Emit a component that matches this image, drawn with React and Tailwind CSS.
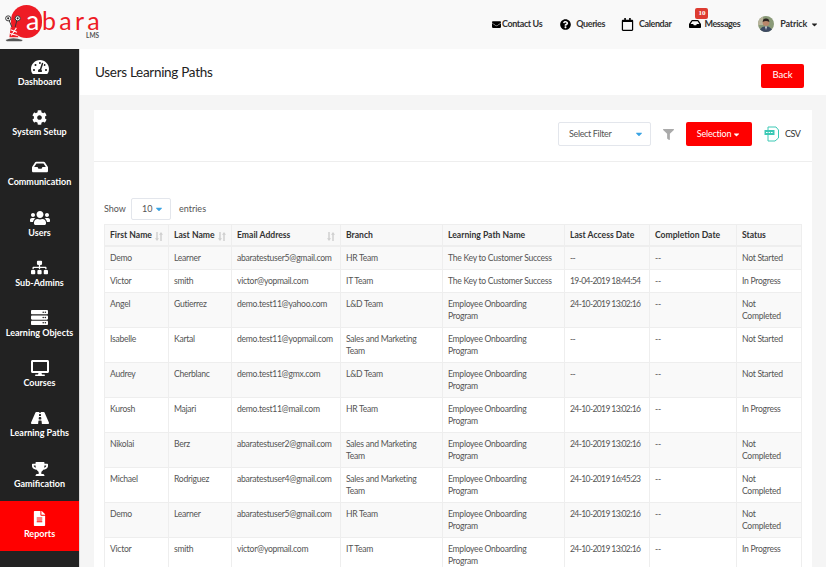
import React from "react";
import { FaTachometerAlt, FaCog, FaInbox, FaUsers, FaSitemap, FaServer, FaDesktop, FaRoad, FaTrophy, FaFileAlt, FaEnvelope, FaQuestionCircle, FaRegCalendar, FaCaretDown, FaFilter } from "react-icons/fa";

const nav = [
  ["Dashboard", FaTachometerAlt, 18],
  ["System Setup", FaCog, 15],
  ["Communication", FaInbox, 16],
  ["Users", FaUsers, 20],
  ["Sub-Admins", FaSitemap, 17],
  ["Learning Objects", FaServer, 17],
  ["Courses", FaDesktop, 18],
  ["Learning Paths", FaRoad, 18],
  ["Gamification", FaTrophy, 16],
  ["Reports", FaFileAlt, 15],
];

const KEY = "The Key to Customer Success";
const EOP = "Employee Onboarding\nProgram";
const SM = "Sales and Marketing\nTeam";
const NC = "Not\nCompleted";
const rows = [
  ["Demo", "Learner", "abaratestuser5@gmail.com", "HR Team", KEY, "--", "--", "Not Started"],
  ["Victor", "smith", "victor@yopmail.com", "IT Team", KEY, "19-04-2019 18:44:54", "--", "In Progress"],
  ["Angel", "Gutierrez", "demo.test11@yahoo.com", "L&D Team", EOP, "24-10-2019 13:02:16", "--", NC],
  ["Isabelle", "Kartal", "demo.test11@yopmail.com", SM, EOP, "--", "--", "Not Started"],
  ["Audrey", "Cherblanc", "demo.test11@gmx.com", "L&D Team", EOP, "--", "--", "Not Started"],
  ["Kurosh", "Majari", "demo.test11@mail.com", "HR Team", EOP, "24-10-2019 13:02:16", "--", "In Progress"],
  ["Nikolai", "Berz", "abaratestuser2@gmail.com", SM, EOP, "24-10-2019 13:02:16", "--", NC],
  ["Michael", "Rodriguez", "abaratestuser4@gmail.com", SM, EOP, "24-10-2019 16:45:23", "--", NC],
  ["Demo", "Learner", "abaratestuser5@gmail.com", "HR Team", EOP, "24-10-2019 13:02:16", "--", NC],
  ["Victor", "smith", "victor@yopmail.com", "IT Team", EOP, "24-10-2019 13:02:16", "--", "In Progress"],
];

const heads = [
  ["First Name", 64, true],
  ["Last Name", 63, true],
  ["Email Address", 109, true],
  ["Branch", 102, false],
  ["Learning Path Name", 122, false],
  ["Last Access Date", 85, false],
  ["Completion Date", 87, false],
  ["Status", 65, false],
];

function SortIcon() {
  return (
    <svg viewBox="0 0 10 10" className="absolute right-[5px] top-[7px] h-[9px] w-[8px] text-[#cfcfcf]" fill="currentColor" preserveAspectRatio="none">
      <path d="M1.6 0h1.8v7H5L2.5 10 0 7h1.6z" />
      <path d="M6.6 10h1.8V3H10L7.5 0 5 3h1.6z" />
    </svg>
  );
}

function Logo() {
  return (
    <div className="relative h-[49px] w-[110px] shrink-0 font-['Lato',sans-serif]">
      <div className="absolute left-[11px] top-[5px] h-[33px] w-[31px] rounded-full bg-[#ee1c25]" />
      <span className="absolute left-[26px] top-[8px] text-[27px] font-normal leading-[24px] text-white">a</span>
      <span className="absolute left-[42px] top-[8px] text-[25px] font-normal leading-[24px] tracking-[3.3px] text-[#ee1c25]">bara</span>
      <span className="absolute left-[86px] top-[32px] text-[6.5px] font-bold leading-[8px] text-[#555]">LMS</span>
      <svg viewBox="0 0 30 44" className="absolute left-[5px] top-[14px] h-[29px] w-[19px]">
        <path d="M6 8 L11 20 M19 8 L16 20" stroke="#333" strokeWidth="1.5" />
        <circle cx="5" cy="6" r="4" fill="#fff" stroke="#333" strokeWidth="1.5" />
        <circle cx="20" cy="6" r="4" fill="#fff" stroke="#333" strokeWidth="1.5" />
        <circle cx="5" cy="6" r="1.6" fill="#222" />
        <circle cx="20" cy="6" r="1.6" fill="#222" />
        <path d="M9 20 H18 L21 36 H7 Z" fill="#ee1c25" />
        <path d="M9 24 L19 28 M8 30 L20 33 M18 21 L10 33" stroke="#fff" strokeWidth="1.6" />
        <path d="M1 40 Q12 35 28 40 L26 42 H3 Z" fill="#555" />
      </svg>
    </div>
  );
}

function Avatar() {
  return (
    <svg viewBox="0 0 16 16" className="h-[16px] w-[16px] rounded-full">
      <rect width="16" height="16" fill="#8a9a78" />
      <rect x="0" width="5" height="9" fill="#b9b49c" />
      <path d="M1 16 Q3 10 8 10.5 Q13 10 15 16Z" fill="#3d4a63" />
      <circle cx="8" cy="6.5" r="3.4" fill="#b9876b" />
      <path d="M4.6 6 Q5 2.4 8 2.6 Q11 2.4 11.4 6 Q8 4 4.6 6Z" fill="#2b2320" />
      <path d="M7 10.5 H9 L8 14Z" fill="#e6e6e6" />
    </svg>
  );
}

function TopLink({ icon, label, className = "" }) {
  return (
    <div className={`flex items-center text-[9px] font-bold leading-[12px] tracking-[-0.4px] text-[#333] ${className}`}>
      {icon}
      <span>{label}</span>
    </div>
  );
}

export default function App() {
  return (
    <div className="flex h-[567px] w-[826px] flex-col overflow-hidden bg-[#f5f5f5] font-['Lato',sans-serif] text-[#444]">
      <header className="flex h-[49px] shrink-0 items-center bg-[#f9f9f9]">
        <Logo />
        <nav className="ml-auto flex items-center pb-[1px] pr-[7px]">
          <TopLink icon={<FaEnvelope className="mr-[1px] text-[9px] text-black" />} label="Contact Us" className="mr-[18px]" />
          <TopLink icon={<FaQuestionCircle className="mr-[5px] text-[11px] text-black" />} label="Queries" className="mr-[16px]" />
          <TopLink icon={<FaRegCalendar className="mr-[5px] text-[13px] text-black" />} label="Calendar" className="mr-[18px]" />
          <div className="relative mr-[18px]">
            <TopLink icon={<FaInbox className="mr-[3px] text-[12px] text-black" />} label="Messages" />
            <span className="absolute left-[6px] top-[-10px] flex h-[11px] w-[13px] items-center justify-center rounded-[2px] bg-[#dd3c31] font-['Liberation_Serif',serif] text-[7px] font-bold text-white">10</span>
          </div>
          <Avatar />
          <span className="ml-[6px] text-[9px] font-bold tracking-[-0.2px] text-[#333]">Patrick</span>
          <FaCaretDown className="ml-[3px] text-[9px] text-[#222]" />
        </nav>
      </header>

      <div className="flex min-h-0 flex-1">
        <aside className="box-content w-[79px] shrink-0 border-r border-[#ddd] bg-[#222]">
          {nav.map(([label, Icon, size]) => (
            <div key={label} className={`flex h-[50.2px] flex-col items-center pt-[9px] text-[9px] font-bold leading-[12px] text-white ${label === "Reports" ? "bg-[#ff0000]" : ""}`}>
              <div className="flex h-[18px] items-center justify-center">
                <Icon style={{ fontSize: size }} />
              </div>
              <span className="whitespace-nowrap">{label}</span>
            </div>
          ))}
        </aside>

        <main className="min-w-0 flex-1">
          <div className="flex h-[46px] items-center justify-between bg-white pl-[15px] pr-[22px]">
            <h1 className="text-[13.5px] font-normal tracking-[-0.3px] text-[#222]">Users Learning Paths</h1>
            <button className="mt-[7px] h-[24px] w-[43px] rounded-[2px] bg-[#ff0000] text-[9.5px] text-white">Back</button>
          </div>

          <section className="mx-[14px] mt-[15px] bg-white">
            <div className="flex h-[52px] items-center justify-end border-b border-[#eee] pb-[3px] pr-[12px]">
              <div className="flex h-[24px] w-[93px] items-center justify-between rounded-[2px] border border-[#e3e6ec] pl-[10px] pr-[6px] text-[9px] tracking-[-0.35px] text-[#555]">
                <span>Select Filter</span>
                <FaCaretDown className="text-[10px] text-[#3aa3e3]" />
              </div>
              <FaFilter className="ml-[12px] text-[11px] text-[#aaa]" />
              <button className="ml-[12px] flex h-[24px] w-[66px] items-center justify-center rounded-[2px] bg-[#ff0000] text-[9px] tracking-[-0.2px] text-white">
                Selection<FaCaretDown className="ml-[1px] text-[9px]" />
              </button>
              <svg viewBox="0 0 16 16" className="ml-[12px] h-[16px] w-[16px]" fill="none">
                <path d="M4 4 V1 H12 L14.5 4 V12 L11 15 H4 V9" stroke="#3cc9b5" strokeWidth="1" />
                <rect x="0.5" y="4" width="10" height="5" fill="#3cc9b5" />
                <path d="M2 6.5h1.6M4.6 6.5h1.6M7 6.5h1.6" stroke="#fff" strokeWidth="1" />
              </svg>
              <span className="ml-[5px] w-[15px] text-[9px] tracking-[-0.5px] text-[#333]">CSV</span>
            </div>

            <div className="flex items-center px-[10px] pt-[36px] text-[9px] text-[#555]">
              <span className="w-[27px]">Show</span>
              <div className="flex h-[22px] w-[40px] items-center justify-between rounded-[2px] border border-[#e3e6ec] pl-[10px] pr-[6px]">
                <span>10</span>
                <FaCaretDown className="text-[10px] text-[#3aa3e3]" />
              </div>
              <span className="ml-[8px]">entries</span>
            </div>

            <table className="ml-[10px] mt-[3.5px] w-[697px] table-fixed border-collapse text-[8.6px] leading-[12px] tracking-[-0.28px] text-[#555]">
              <colgroup>
                {heads.map(([h, w]) => (
                  <col key={h} style={{ width: w }} />
                ))}
              </colgroup>
              <thead>
                <tr className="bg-[#f8f8f8]">
                  {heads.map(([h, , sort]) => (
                    <th key={h} className="relative h-[22px] border border-b-2 border-[#eee] px-[5px] text-left font-bold tracking-normal whitespace-nowrap text-[#333]">
                      {h}
                      {sort && <SortIcon />}
                    </th>
                  ))}
                </tr>
              </thead>
              <tbody>
                {rows.map((r, i) => (
                  <tr key={i} className={i % 2 === 0 ? "bg-[#f9f9f9]" : "bg-white"}>
                    {r.map((c, j) => (
                      <td key={j} className={`border border-[#eee] px-[5px] py-[5px] align-top whitespace-pre ${j === 5 ? "tracking-[-0.65px]" : ""}`}>
                        {c}
                      </td>
                    ))}
                  </tr>
                ))}
              </tbody>
            </table>
          </section>
        </main>
      </div>
    </div>
  );
}
